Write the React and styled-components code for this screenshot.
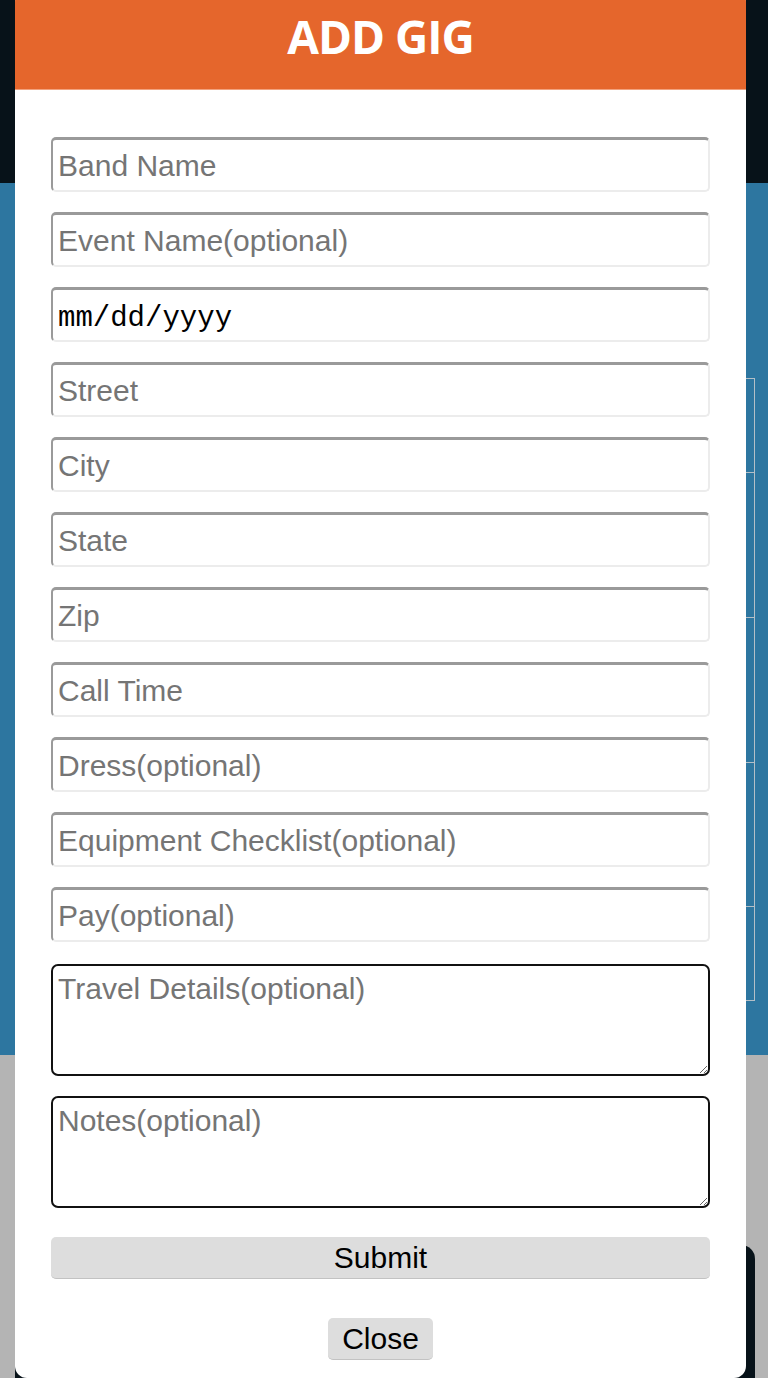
import React from "react";
import styled, { createGlobalStyle } from "styled-components";

const GlobalStyle = createGlobalStyle`
  html, body {
    margin: 0;
    padding: 0;
    height: 1378px;
    overflow: hidden;
    font-family: "Liberation Sans", Arial, sans-serif;
  }
  * { box-sizing: border-box; }
`;

const Page = styled.div`
  position: relative;
  width: 768px;
  height: 1378px;
  overflow: hidden;
  display: flex;
  flex-direction: column;
  background: #b4b4b4;
`;

const NavBar = styled.div`
  height: 183px;
  background: #071219;
  flex: none;
`;

const Hero = styled.section`
  height: 872px;
  flex: none;
  background: #2d76a0;
  padding: 195px 0 0 15px;
`;

const Table = styled.div`
  width: 740px;
  border: 1px solid #b3bfc7;
  border-bottom: none;
  display: flex;
  flex-direction: column;
`;

const TableRow = styled.div`
  height: ${(p) => p.$h}px;
  border-bottom: 1px solid #b3bfc7;
`;

const Footer = styled.section`
  flex: 1;
  padding: 190px 0 0 15px;
`;

const DarkCard = styled.div`
  width: 740px;
  height: 300px;
  background: #071219;
  border-radius: 14px;
`;

const Modal = styled.div`
  position: absolute;
  top: -10px;
  left: 15px;
  width: 731px;
  background: #ffffff;
  border-radius: 12px;
  overflow: hidden;
  display: flex;
  flex-direction: column;
`;

const Header = styled.header`
  height: 100px;
  background: #e5662c;
  border-bottom: 1px solid #f2a27e;
  display: flex;
  align-items: center;
  justify-content: center;
  padding-bottom: 8px;
`;

const Title = styled.h1`
  margin: 0;
  color: #ffffff;
  font-family: "Open Sans", "Liberation Sans", sans-serif;
  font-weight: 700;
  font-size: 46px;
  letter-spacing: -1px;
`;

const Form = styled.form`
  display: flex;
  flex-direction: column;
  gap: 20px;
  padding: 47px 36px 18px 36px;
`;

const TextInput = styled.input`
  width: 100%;
  height: 55px;
  margin: 0;
  padding: ${(p) => (p.$mono ? "6px 5px 0" : "2px 5px 0")};
  border-style: solid;
  border-width: 3px 2px 2px 2px;
  border-color: #9a9a9a #ececec #ececec #9a9a9a;
  border-radius: 5px;
  background: #fff;
  font-family: ${(p) =>
    p.$mono ? '"Liberation Mono", "Courier New", monospace' : '"Liberation Sans", Arial, sans-serif'};
  font-size: ${(p) => (p.$mono ? "29px" : "30px")};
  color: #000;
  outline: none;
  &::placeholder {
    color: #757575;
    opacity: 1;
  }
`;

const TextArea = styled.textarea`
  width: 100%;
  height: 112px;
  margin: ${(p) => (p.$first ? "2px 0 0" : "0")};
  padding: 6px 5px;
  border: 2px solid #111;
  border-radius: 7px;
  background: #fff;
  font-family: "Liberation Sans", Arial, sans-serif;
  font-size: 30px;
  line-height: 1.15;
  outline: none;
  &::placeholder {
    color: #757575;
    opacity: 1;
  }
`;

const Button = styled.button`
  height: 42px;
  margin: 0;
  border: none;
  border-bottom: 1px solid #c2c2c2;
  border-radius: 5px;
  background: #dddddd;
  color: #000;
  font-family: "Liberation Sans", Arial, sans-serif;
  font-size: 30px;
  cursor: pointer;
  padding: ${(p) => (p.$wide ? "0" : "0 14px")};
  width: ${(p) => (p.$wide ? "100%" : "auto")};
  align-self: center;
  margin-top: ${(p) => p.$mt || 0}px;
`;

const fields = [
  { ph: "Band Name" },
  { ph: "Event Name(optional)" },
  { date: true },
  { ph: "Street" },
  { ph: "City" },
  { ph: "State" },
  { ph: "Zip" },
  { ph: "Call Time" },
  { ph: "Dress(optional)" },
  { ph: "Equipment Checklist(optional)" },
  { ph: "Pay(optional)" },
];

export default function App() {
  return (
    <>
      <GlobalStyle />
      <Page>
        <NavBar />
        <Hero>
          <Table>
            {[94, 145, 145, 144, 94].map((h, i) => (
              <TableRow key={i} $h={h} />
            ))}
          </Table>
        </Hero>
        <Footer>
          <DarkCard />
        </Footer>
        <Modal>
          <Header>
            <Title>ADD GIG</Title>
          </Header>
          <Form onSubmit={(e) => e.preventDefault()}>
            {fields.map((f, i) =>
              f.date ? (
                <TextInput key={i} $mono type="text" defaultValue="mm/dd/yyyy" readOnly />
              ) : (
                <TextInput key={i} type="text" placeholder={f.ph} />
              )
            )}
            <TextArea $first placeholder="Travel Details(optional)" />
            <TextArea placeholder="Notes(optional)" />
            <Button type="submit" $wide $mt={9}>
              Submit
            </Button>
            <Button type="button" $mt={19}>
              Close
            </Button>
          </Form>
        </Modal>
      </Page>
    </>
  );
}
